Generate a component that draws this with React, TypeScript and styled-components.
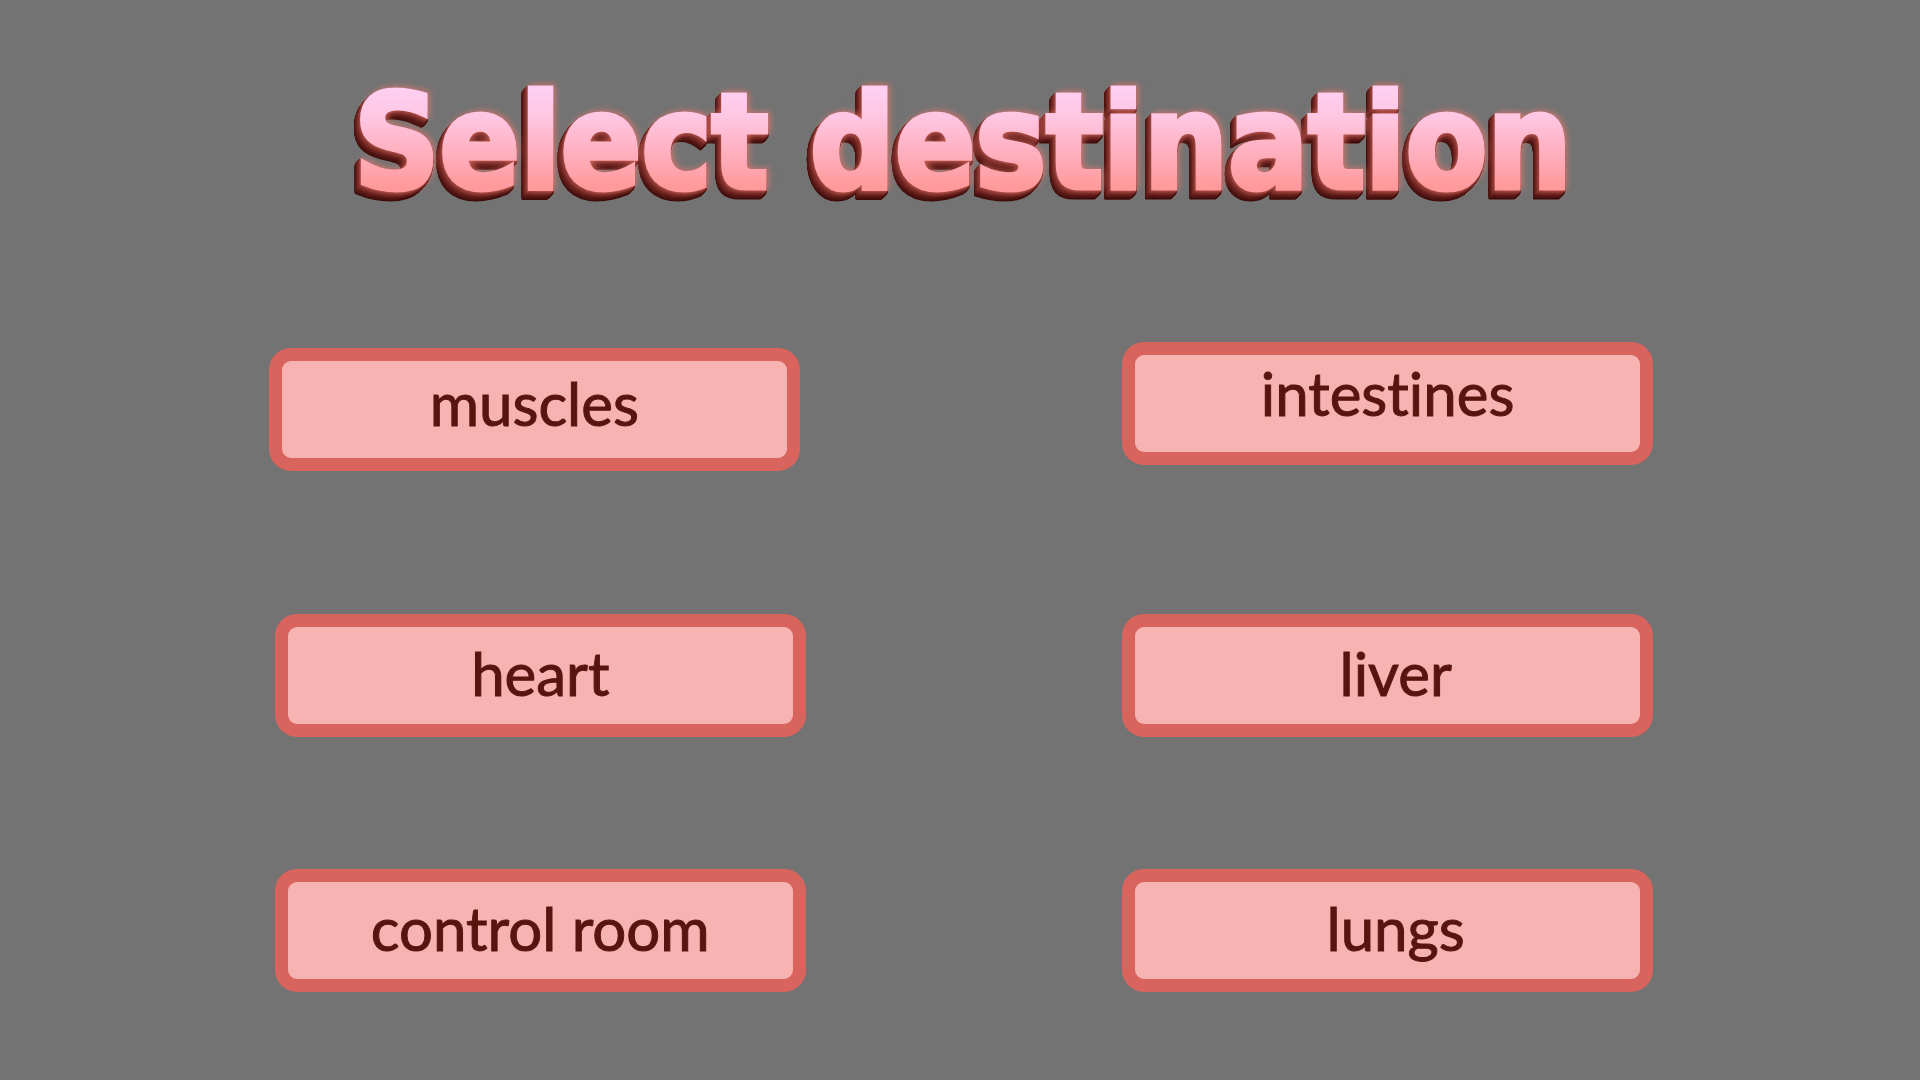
import React from "react";
import styled, { createGlobalStyle } from "styled-components";

const GlobalStyle = createGlobalStyle`
  *, *::before { box-sizing: border-box; }
  body {
    margin: 0;
    background: #737373;
  }
`;

const Screen = styled.main`
  display: flex;
  flex-direction: column;
  min-height: 100vh;
  padding: 72px 0 82px;
`;

const Title = styled.h1`
  position: relative;
  z-index: 0;
  align-self: center;
  margin: 0;
  padding-left: 6px;
  font: 700 132px/140px "DejaVu Sans Condensed", "DejaVu Sans", sans-serif;
  white-space: nowrap;

  &::before {
    content: attr(data-text);
    position: absolute;
    inset: 0;
    z-index: -1;
    padding-left: 6px;
    color: #8f3b36;
    -webkit-text-stroke: 5px #8f3b36;
    filter:
      drop-shadow(-1px 1px 0 #8f3b36)
      drop-shadow(-1px 1px 0 #84332f)
      drop-shadow(-1px 1px 0 #782b27)
      drop-shadow(-1px 1px 0 #6c2420)
      drop-shadow(-1px 1px 0 #601d1a)
      drop-shadow(0 1px 0 #561815)
      drop-shadow(-1px 1px 0 #4d1411)
      drop-shadow(0 1px 0 #45100d)
      drop-shadow(0 1px 0 #3d0c0a);
  }
`;

const TitleFace = styled.span`
  display: block;
  color: transparent;
  background: linear-gradient(#ffd0f2 12%, #ffc6e2 32%, #ff9a9c 82%);
  -webkit-background-clip: text;
  background-clip: text;
  -webkit-text-stroke: 5px transparent;
  filter: drop-shadow(2px -1px 3px rgba(240, 120, 108, 0.7));
`;

const Destinations = styled.nav`
  display: flex;
  flex-direction: column;
  gap: 132px;
  margin-top: 130px;
  padding: 0 13.9vw 0 14vw;
`;

const Row = styled.div<{ $staggered?: boolean }>`
  display: flex;
  justify-content: space-between;
  align-items: ${(p) => (p.$staggered ? "flex-end" : "flex-start")};
  gap: 32px;
  padding-left: ${(p) => (p.$staggered ? 0 : 6)}px;
  padding-bottom: ${(p) => (p.$staggered ? 11 : 0)}px;
  min-height: ${(p) => (p.$staggered ? 140 : 123)}px;
`;

const Choice = styled.button<{ $raised?: boolean; $indent?: boolean; $lift?: number }>`
  flex: 0 1 531px;
  align-self: ${(p) => (p.$raised ? "flex-start" : "auto")};
  height: 123px;
  padding: 0 0 ${(p) => p.$lift ?? 6}px ${(p) => (p.$indent ? 16 : 0)}px;
  border: 13px solid #d8645d;
  border-radius: 22px;
  background: #f7b3b1;
  color: #58140e;
  font: 400 60px/72px Lato, sans-serif;
  font-variant-ligatures: none;
  -webkit-text-stroke: 1px #58140e;
  cursor: pointer;
`;

export default function App() {
  const title = "Select destination";
  return (
    <>
      <GlobalStyle />
      <Screen>
        <Title data-text={title}>
          <TitleFace>{title}</TitleFace>
        </Title>
        <Destinations aria-label={title}>
          <Row $staggered>
            <Choice type="button" $lift={14}>muscles</Choice>
            <Choice type="button" $raised $lift={22}>intestines</Choice>
          </Row>
          <Row>
            <Choice type="button">heart</Choice>
            <Choice type="button" $indent>liver</Choice>
          </Row>
          <Row>
            <Choice type="button">control room</Choice>
            <Choice type="button" $indent>lungs</Choice>
          </Row>
        </Destinations>
      </Screen>
    </>
  );
}
